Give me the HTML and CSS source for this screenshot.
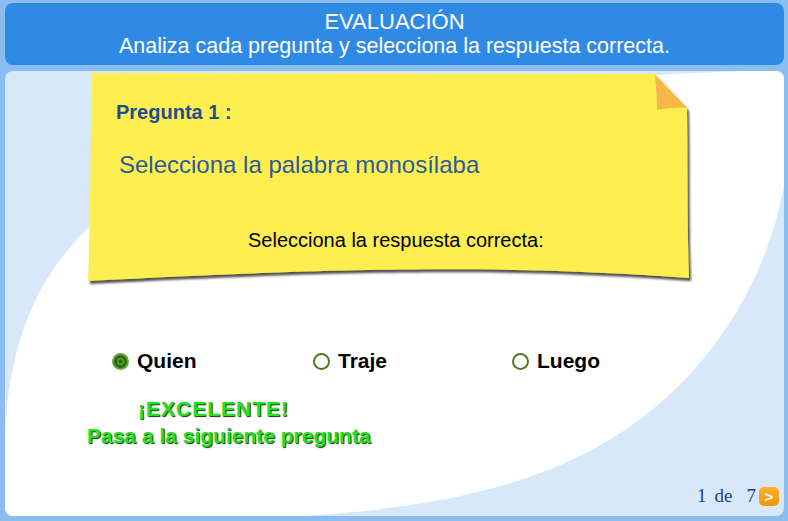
FILE: index.html
```html
<!DOCTYPE html>
<html lang="es">

<head>
    <meta charset="UTF-8">
    <meta name="viewport" content="width=device-width, initial-scale=1.0">
    <title>Evaluación</title>
    <link rel="stylesheet" href="styles.css">
</head>

<body>
    <div id="app">
        <header class="header">
            <div class="header-title">EVALUACIÓN</div>
            <div class="header-sub">Analiza cada pregunta y selecciona la respuesta correcta.</div>
        </header>

        <main class="panel">
            <!-- white sweep behind the content -->
            <svg class="sweep" viewBox="0 0 779 445" preserveAspectRatio="none">
                <path d="M0,445 L0,360 C5,280 25,215 80,160 C200,50 450,10 740,0 L779,0 L779,115 C760,220 690,335 560,392 C480,428 380,440 300,445 Z" fill="#fff" />
            </svg>

            <div class="content">
                <section class="note">
                    <svg class="note-paper" viewBox="0 0 612 218">
                        <defs>
                            <filter id="paper-shadow" x="-5%" y="-5%" width="110%" height="115%">
                                <feDropShadow dx="2" dy="3" stdDeviation="1" flood-color="#333" flood-opacity="0.85" />
                            </filter>
                        </defs>
                        <path d="M6,2 L569,3 L601,37 C602,90 601,150 603,207 C450,196 300,194 2,210 C5,140 4,70 6,2 Z" fill="#feee50" filter="url(#paper-shadow)" />
                        <path d="M569,4 L601,37 C593,36 581,37 571,39 C571,27 570,15 569,4 Z" fill="#f6b64a" />
                    </svg>
                    <div class="note-label">Pregunta 1 :</div>
                    <div class="note-question">Selecciona la palabra monosílaba</div>
                    <div class="note-hint">Selecciona la respuesta correcta:</div>
                </section>

                <div class="options">
                    <label class="option">
                        <span class="radio checked"></span>
                        <span>Quien</span>
                    </label>
                    <label class="option">
                        <span class="radio"></span>
                        <span>Traje</span>
                    </label>
                    <label class="option">
                        <span class="radio"></span>
                        <span>Luego</span>
                    </label>
                </div>

                <div class="feedback">
                    <div class="feedback-title">¡EXCELENTE!</div>
                    <div class="feedback-text">Pasa a la siguiente pregunta</div>
                </div>

                <footer class="pager">
                    <span class="pager-count">1</span>
                    <span class="pager-de">de</span>
                    <span class="pager-total">7</span>
                    <span class="pager-next">&gt;</span>
                </footer>
            </div>
        </main>
    </div>
</body>

</html>
```

FILE: styles.css
```css
body {
    margin: 0;
    padding: 0;
    background: #8abdf0;
    font-family: 'Liberation Sans', Arial, sans-serif;
}

#app {
    width: 788px;
    height: 521px;
    padding: 3px 4px 0 5px;
    box-sizing: border-box;
    display: flex;
    flex-direction: column;
    gap: 6px;
}

.header {
    height: 62px;
    box-sizing: border-box;
    padding-top: 6px;
    background: #2f8ae6;
    border-radius: 8px;
    color: #fff;
    text-align: center;
    line-height: 25px;
}

.header-title {
    font-size: 22px;
}

.header-sub {
    font-size: 21.5px;
}

.panel {
    position: relative;
    height: 445px;
    background: #d7e8f9;
    border-radius: 8px;
    overflow: hidden;
}

.sweep {
    position: absolute;
    left: 0;
    top: 0;
    width: 100%;
    height: 100%;
}

.content {
    position: relative;
    height: 100%;
    display: flex;
    flex-direction: column;
}

/* sticky note */
.note {
    position: relative;
    width: 612px;
    height: 215px;
    margin-left: 81px;
    box-sizing: border-box;
    padding: 29px 0 0 30px;
}

.note-paper {
    position: absolute;
    left: 0;
    top: 0;
    width: 612px;
    height: 218px;
}

.note-label,
.note-question,
.note-hint {
    position: relative;
}

.note-label {
    font-size: 20px;
    font-weight: bold;
    line-height: 24px;
    color: #1d4e8e;
}

.note-question {
    margin: 26px 0 0 3px;
    font-size: 24px;
    line-height: 30px;
    color: #2b5b9c;
}

.note-hint {
    margin-top: 48px;
    padding-left: 132px;
    font-size: 20px;
    line-height: 24px;
    color: #000;
}

/* answers */
.options {
    display: grid;
    grid-template-columns: 201px 199px 200px;
    margin: 62px 0 0 107px;
}

.option {
    display: flex;
    align-items: center;
    gap: 8px;
    font-size: 21px;
    font-weight: bold;
    line-height: 26px;
    color: #000;
}

.radio {
    width: 13px;
    height: 13px;
    border: 2px solid #4d7a25;
    border-radius: 50%;
    background: #fff;
}

.radio.checked {
    border-color: #6aa53c;
    background: radial-gradient(circle, #2c6a10 0 2px, #4f9a2c 2px 4px, #2c6a10 4px);
}

.feedback {
    margin-top: 21px;
    font-size: 21px;
    font-weight: bold;
    line-height: 27px;
    color: #22e022;
    text-shadow: 1px 1px 1px #0a3a0a;
}

.feedback-title {
    margin-left: 133px;
    letter-spacing: 1px;
}

.feedback-text {
    margin-left: 82px;
}

/* pagination */
.pager {
    margin-top: auto;
    padding: 0 5px 10px 0;
    display: flex;
    justify-content: flex-end;
    align-items: center;
    font-family: 'Liberation Serif', 'Times New Roman', serif;
    font-size: 19px;
    line-height: 20px;
    color: #1e3f86;
}

.pager-de {
    margin: 0 14px 0 8px;
}

.pager-next {
    margin-left: 3px;
    width: 20px;
    height: 19px;
    border-radius: 5px;
    background: linear-gradient(#f9b02e, #f1940c);
    color: #fff;
    font-family: 'Liberation Sans', Arial, sans-serif;
    font-size: 15px;
    font-weight: bold;
    line-height: 19px;
    text-align: center;
}
```
